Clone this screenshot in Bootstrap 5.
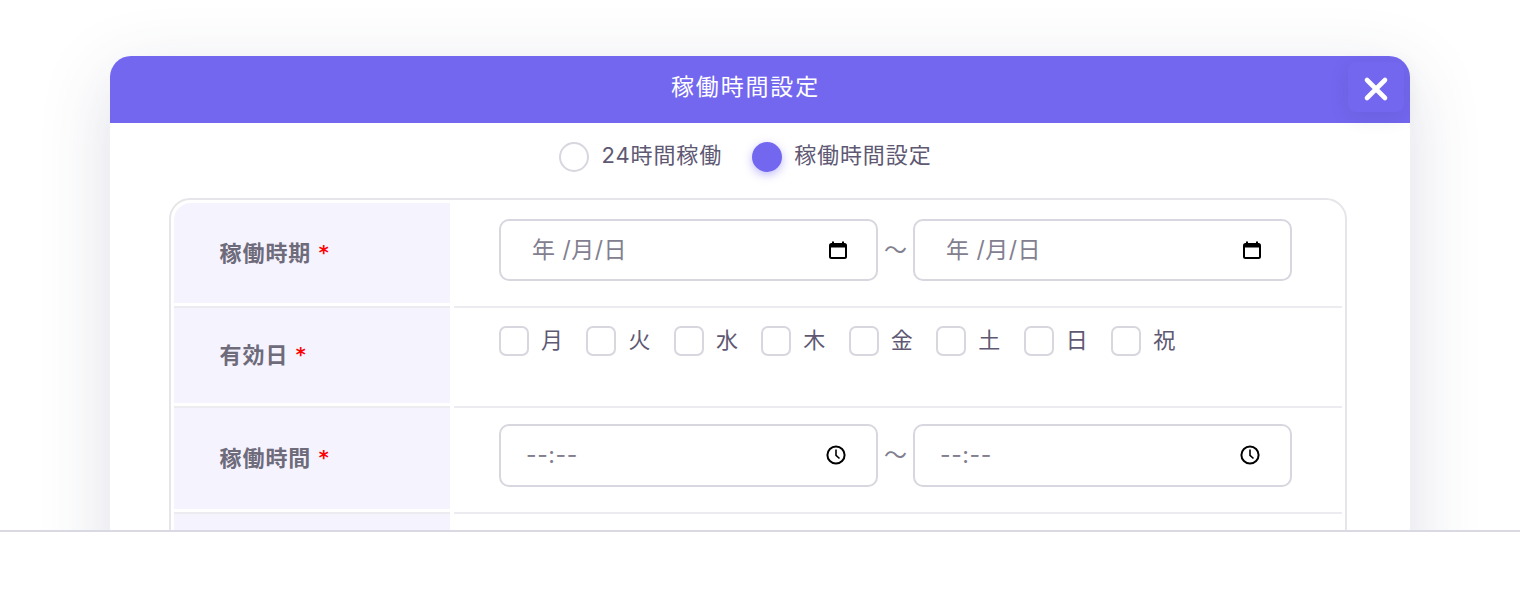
<!DOCTYPE html>
<html lang="ja">
<head>
<meta charset="utf-8">
<title>稼働時間設定</title>
<link href="https://cdn.jsdelivr.net/npm/bootstrap@5.3.0/dist/css/bootstrap.min.css" rel="stylesheet">
<style>
html,body{height:604px;overflow:hidden;background:#fff}
body{font-family:Inter,"Noto Sans CJK JP",sans-serif;color:#5e5873}
.stage{height:530px;overflow:hidden;padding:56px 110px 0}
.sheet{background:#fff;border-radius:21px 21px 0 0;box-shadow:0 20px 70px rgba(60,64,110,.17);height:600px}
.sheet-head{position:relative;height:67px;background:#7367f0;border-radius:21px 21px 0 0;color:#fff;font-size:23px;letter-spacing:1.85px;padding-right:29px;padding-bottom:4px}
.close-x{position:absolute;top:6px;right:6px;width:56px;height:50px;border:0;border-radius:8px;background:#7367f0;box-shadow:0 5px 20px rgba(34,41,47,.1);padding:0}
.close-x svg{display:block;margin:0 auto;position:relative;top:2px}
.mode-row{height:75px;padding-right:29px;padding-bottom:8px;gap:30px}
.pick{font-size:22px;letter-spacing:.9px;gap:12px;line-height:30px;color:#5e5873}
.pick>span{position:relative;top:-2px}
.pick input,.day input{appearance:none;width:30px;height:30px;margin:0;border:2px solid #d8d6de;background:#fff;flex:none}
.pick input{border-radius:50%}
.pick input:checked{background:#7367f0;border-color:#7367f0;box-shadow:0 3px 10px rgba(115,103,240,.45)}
.sheet-table{margin:0 63px 0 59px;border:2px solid #e6e6ea;border-radius:21px;padding:3px;height:500px}
.tr-line{display:flex;gap:4px}
.th-cell{width:276px;flex:none;padding:0 0 3px;border-bottom:2px solid #ebebf0}
.th-inner{height:100%;display:flex;align-items:center;padding-left:45.5px;font-weight:700;font-size:22px;letter-spacing:.95px;color:#6e6b7b;background:#f5f3fe}
.first .th-inner{border-top-left-radius:17px}
.req{color:#f00;font-family:"DejaVu Sans",sans-serif;font-size:19px;line-height:1;margin-left:7.5px;position:relative;top:-1px;font-weight:700;letter-spacing:0}
.td-cell{flex:1;border-bottom:2px solid #ebebf0;padding:0 0 0 45px}
.r1{height:105px}.r2{height:100px}.r3{height:106px}.r4{height:100px}
.pair{padding-top:16px;width:793px}
.fake-input{flex:none;width:379px;height:62px;border:2px solid #d8d6de;border-radius:10px;font-size:23px;color:#82808f;padding:0 28px 0 25px;letter-spacing:.6px;background:#fff}
.r3 .fake-input{height:63px;padding-right:29px}
.r3 .fake-input svg{position:relative;top:-1px}
.date-txt{padding-left:6px;letter-spacing:.5px}
.tilde{width:35px;text-align:center;font-size:23px;color:#82808f;line-height:1}
.days{gap:23.45px;padding-top:18px}
.day{gap:12px;font-size:22px;line-height:28px;color:#5e5873}
.day input{border-radius:7px}
.foot-line{height:2px;background:#d8d9e3}
</style>
</head>
<body>
<div class="stage">
  <div class="sheet">
    <div class="sheet-head d-flex align-items-center justify-content-center">
      <span>稼働時間設定</span>
      <button class="close-x" type="button" aria-label="閉じる">
        <svg width="26" height="26" viewBox="0 0 26 26"><path d="M4 4 L22 22 M22 4 L4 22" stroke="#fff" stroke-width="4.6" stroke-linecap="round"/></svg>
      </button>
    </div>
    <div class="mode-row d-flex align-items-center justify-content-center">
      <label class="pick d-flex align-items-center"><input type="radio" name="mode"><span>24時間稼働</span></label>
      <label class="pick d-flex align-items-center"><input type="radio" name="mode" checked><span>稼働時間設定</span></label>
    </div>
    <div class="sheet-table">
      <div class="tr-line r1">
        <div class="th-cell first"><div class="th-inner">稼働時期<span class="req">*</span></div></div>
        <div class="td-cell">
          <div class="pair d-flex align-items-center">
            <div class="fake-input d-flex align-items-center justify-content-between"><span class="date-txt">年 /月/日</span>
              <svg width="20" height="20" viewBox="0 0 20 20"><path d="M5 1.5v2.5M15 1.5v2.5" stroke="#000" stroke-width="2"/><rect x="2" y="4" width="16" height="14" rx="1.5" fill="none" stroke="#000" stroke-width="2"/><rect x="2" y="4" width="16" height="3.5" fill="#000"/></svg></div>
            <span class="tilde">～</span>
            <div class="fake-input d-flex align-items-center justify-content-between"><span class="date-txt">年 /月/日</span>
              <svg width="20" height="20" viewBox="0 0 20 20"><path d="M5 1.5v2.5M15 1.5v2.5" stroke="#000" stroke-width="2"/><rect x="2" y="4" width="16" height="14" rx="1.5" fill="none" stroke="#000" stroke-width="2"/><rect x="2" y="4" width="16" height="3.5" fill="#000"/></svg></div>
          </div>
        </div>
      </div>
      <div class="tr-line r2">
        <div class="th-cell"><div class="th-inner">有効日<span class="req">*</span></div></div>
        <div class="td-cell">
          <div class="days d-flex">
            <label class="day d-flex"><input type="checkbox">月</label>
            <label class="day d-flex"><input type="checkbox">火</label>
            <label class="day d-flex"><input type="checkbox">水</label>
            <label class="day d-flex"><input type="checkbox">木</label>
            <label class="day d-flex"><input type="checkbox">金</label>
            <label class="day d-flex"><input type="checkbox">土</label>
            <label class="day d-flex"><input type="checkbox">日</label>
            <label class="day d-flex"><input type="checkbox">祝</label>
          </div>
        </div>
      </div>
      <div class="tr-line r3">
        <div class="th-cell"><div class="th-inner">稼働時間<span class="req">*</span></div></div>
        <div class="td-cell">
          <div class="pair d-flex align-items-center">
            <div class="fake-input d-flex align-items-center justify-content-between"><span>--:--</span>
              <svg width="22" height="22" viewBox="0 0 22 22"><circle cx="11" cy="11" r="8.6" fill="none" stroke="#000" stroke-width="2"/><path d="M11 5.5V11.3L14.5 14.5" fill="none" stroke="#000" stroke-width="1.6"/></svg></div>
            <span class="tilde">～</span>
            <div class="fake-input d-flex align-items-center justify-content-between"><span>--:--</span>
              <svg width="22" height="22" viewBox="0 0 22 22"><circle cx="11" cy="11" r="8.6" fill="none" stroke="#000" stroke-width="2"/><path d="M11 5.5V11.3L14.5 14.5" fill="none" stroke="#000" stroke-width="1.6"/></svg></div>
          </div>
        </div>
      </div>
      <div class="tr-line r4">
        <div class="th-cell"><div class="th-inner"></div></div>
        <div class="td-cell"></div>
      </div>
    </div>
  </div>
</div>
<div class="foot-line"></div>
<script src="https://cdn.jsdelivr.net/npm/bootstrap@5.3.0/dist/js/bootstrap.bundle.min.js"></script>
</body>
</html>
